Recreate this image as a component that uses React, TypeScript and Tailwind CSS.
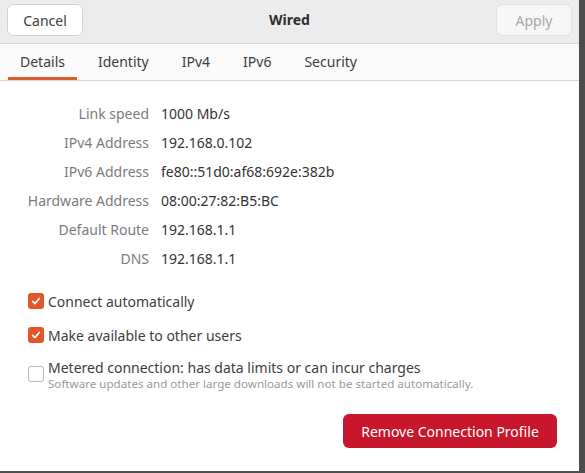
import React from "react";

const rows: [string, string][] = [
  ["Link speed", "1000 Mb/s"],
  ["IPv4 Address", "192.168.0.102"],
  ["IPv6 Address", "fe80::51d0:af68:692e:382b"],
  ["Hardware Address", "08:00:27:82:B5:BC"],
  ["Default Route", "192.168.1.1"],
  ["DNS", "192.168.1.1"],
];

const tabs = ["Details", "Identity", "IPv4", "IPv6", "Security"];

function Check({ on }: { on: boolean }) {
  if (!on) {
    return <span className="mt-[7px] h-4 w-4 shrink-0 rounded-[3px] border border-[#b8b8b8] bg-white" />;
  }
  return (
    <span className="flex h-4 w-4 shrink-0 items-center justify-center rounded-[3px] bg-[#e2562a]">
      <svg viewBox="0 0 16 16" className="h-3 w-3" fill="none" stroke="white" strokeWidth="2.2" strokeLinecap="round" strokeLinejoin="round">
        <path d="M3.5 8.5l3 3 6-7" />
      </svg>
    </span>
  );
}

export default function App() {
  return (
    <div className="flex h-[473px] w-[585px] bg-[#4d4d4d]" style={{ fontFamily: '"Noto Sans", "Open Sans", sans-serif' }}>
      <div className="flex h-[471px] w-[579px] flex-col bg-white text-[14px] text-[#3d3d3d]">
        {/* header bar */}
        <div className="flex h-[44px] shrink-0 items-start justify-between border-b border-[#d6d6d6] bg-[#ececec] px-[7px] pt-[4px]">
          <button className="h-[32px] w-[76px] rounded-[6px] border border-[#d2d2d2] bg-white text-[#3d3d3d]">Cancel</button>
          <span className="pt-[5px] font-bold text-[#2e2e2e]">Wired</span>
          <button className="h-[32px] w-[76px] rounded-[6px] border border-[#e0e0e0] bg-[#f7f7f7] text-[#a8a8a8]">Apply</button>
        </div>
        {/* tabs */}
        <div className="flex h-[37px] shrink-0 items-stretch gap-[9px] border-b border-[#d6d6d6] bg-[#fafafa] pl-[8px]">
          {tabs.map((t, i) => (
            <div
              key={t}
              className={
                i === 0
                  ? "flex items-center border-b-[3px] border-[#d8602d] px-[12px] pt-[1px] text-[#3d3d3d]"
                  : "flex items-center border-b-[3px] border-transparent px-[12px] pt-[1px] text-[#3d3d3d]"
              }
            >
              {t}
            </div>
          ))}
        </div>
        {/* details */}
        <div className="flex flex-col pt-[18px]">
          {rows.map(([k, v]) => (
            <div key={k} className="flex h-[29px] items-center">
              <span className="w-[149px] text-right text-[#7b7b7b]">{k}</span>
              <span className="pl-[12px] text-[#333]">{v}</span>
            </div>
          ))}
        </div>
        <div className="mt-[19px] flex flex-col pl-[28px]">
          <div className="flex h-[18px] items-center gap-[4px]">
            <Check on />
            <span>Connect automatically</span>
          </div>
          <div className="mt-[16px] flex h-[18px] items-center gap-[4px]">
            <Check on />
            <span>Make available to other users</span>
          </div>
          <div className="mt-[15px] flex items-start gap-[4px]">
            <Check on={false} />
            <div className="flex flex-col">
              <span className="leading-[18px]">Metered connection: has data limits or can incur charges</span>
              <span className="text-[11.6px] leading-[13px] text-[#9a9a9a]">
                Software updates and other large downloads will not be started automatically.
              </span>
            </div>
          </div>
        </div>
        <div className="mt-[24px] flex justify-end pr-[22px]">
          <button className="h-[34px] w-[214px] rounded-[6px] bg-[#c8172c] text-white">Remove Connection Profile</button>
        </div>
      </div>
    </div>
  );
}
